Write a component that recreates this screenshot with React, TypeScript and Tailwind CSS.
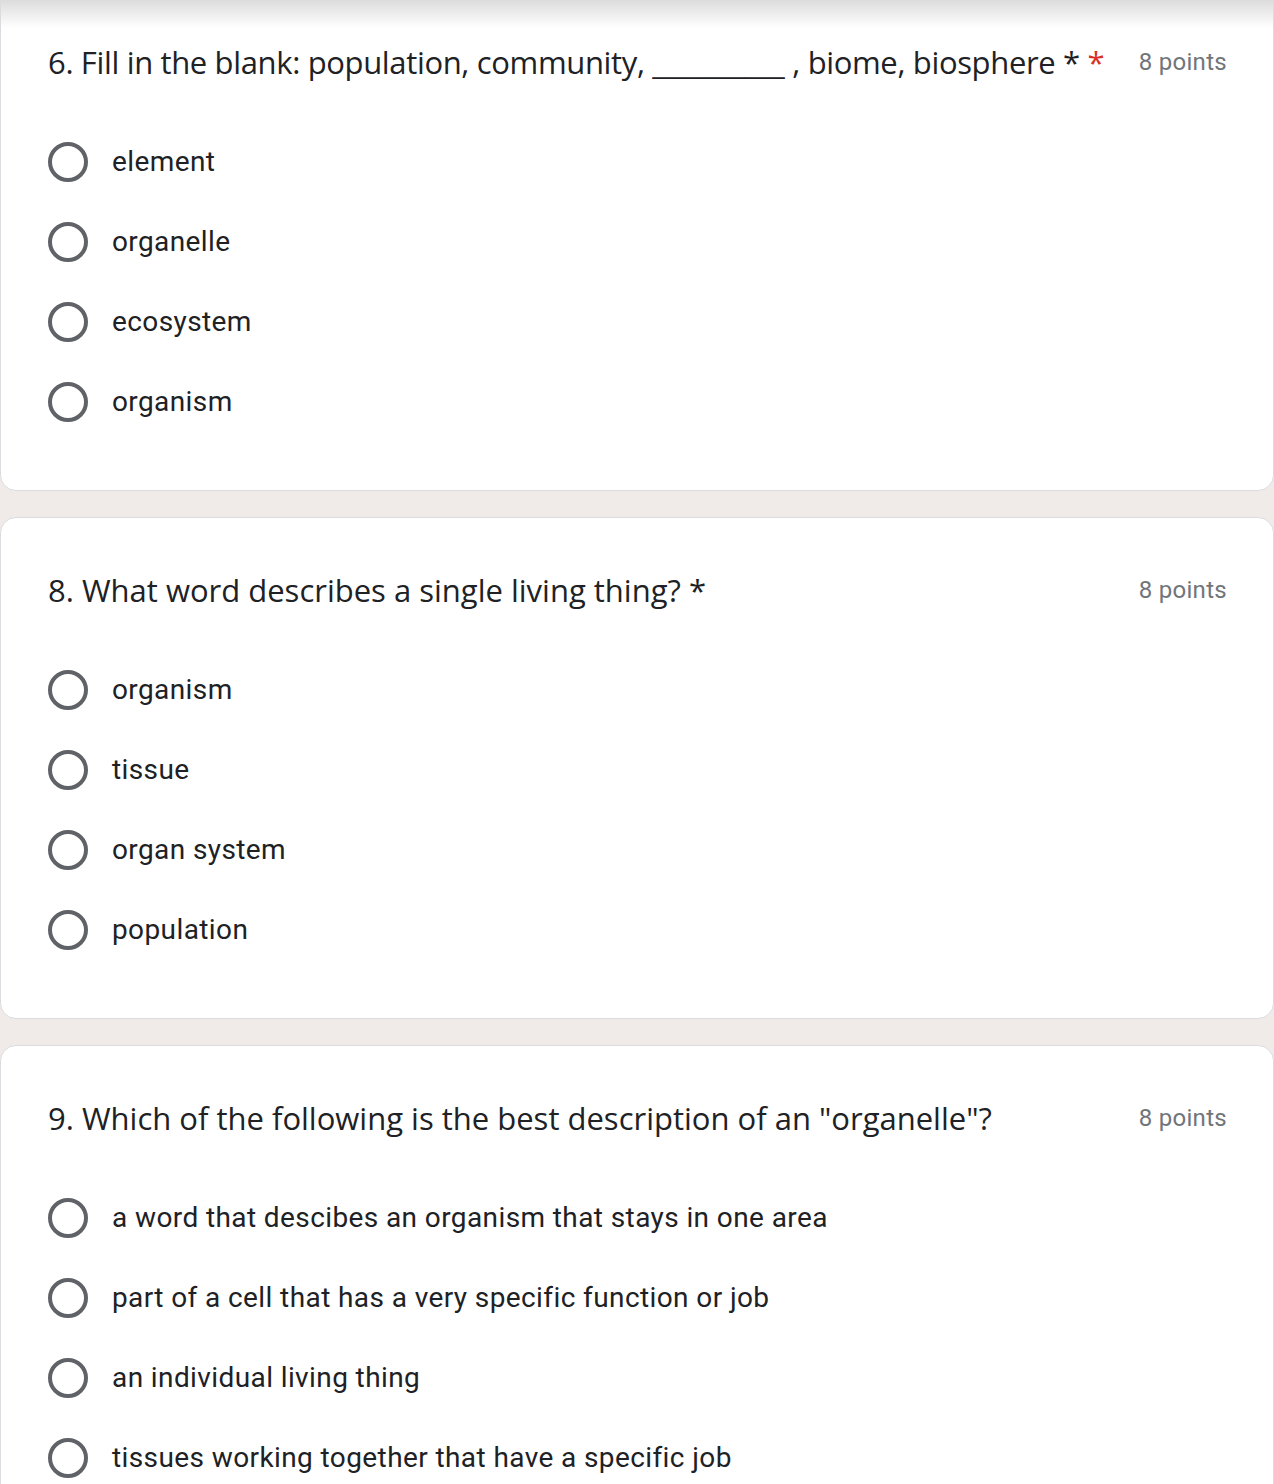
const questions = [
  {
    title: (
      <>
        6. Fill in the blank: population, community, __________ , biome, biosphere *{" "}
        <span className="text-[#d93025]">*</span>
      </>
    ),
    options: ["element", "organelle", "ecosystem", "organism"],
    first: true,
  },
  {
    title: <>8. What word describes a single living thing? *</>,
    options: ["organism", "tissue", "organ system", "population"],
  },
  {
    title: <>9. Which of the following is the best description of an "organelle"?</>,
    options: [
      "a word that descibes an organism that stays in one area",
      "part of a cell that has a very specific function or job",
      "an individual living thing",
      "tissues working together that have a specific job",
    ],
  },
];

const Radio = () => (
  <div className="h-10 w-10 shrink-0 rounded-full border-4 border-[#5f6368]" />
);

const QuestionCard = ({
  title,
  options,
  first,
}: {
  title: React.ReactNode;
  options: string[];
  first?: boolean;
}) => (
  <div
    className={`rounded-2xl border border-[#dadce0] bg-white pb-12 pl-[47px] pr-[46px] pt-12 ${
      first ? "-mt-[11px]" : ""
    }`}
  >
    <div className="flex h-12 items-center justify-between">
      {/* long first title is squeezed a little so the points fit beside it */}
      <div
        className={`whitespace-nowrap font-['Open_Sans',sans-serif] text-[31px] leading-[48px] text-[#202124] ${
          first ? "tracking-[-0.35px]" : ""
        }`}
      >
        {title}
      </div>
      <div className="ml-2 shrink-0 font-['Roboto',sans-serif] text-[24px] tracking-[0.3px] text-[#70757a]">
        8 points
      </div>
    </div>
    <div className="mt-9 flex flex-col">
      {options.map((opt) => (
        <div key={opt} className="flex h-20 items-center gap-6">
          <Radio />
          <span className="font-['Roboto',sans-serif] text-[28px] tracking-[0.4px] text-[#202124]">
            {opt}
          </span>
        </div>
      ))}
    </div>
  </div>
);

export default function App() {
  return (
    <div className="relative h-[1484px] overflow-hidden bg-[#f0ebe8]">
      <div className="flex flex-col gap-[26px]">
        {questions.map((q, i) => (
          <QuestionCard key={i} {...q} />
        ))}
      </div>
      {/* header shadow */}
      <div className="pointer-events-none absolute inset-x-0 top-0 h-7 bg-gradient-to-b from-[#dcdcdc] to-white/0" />
    </div>
  );
}
